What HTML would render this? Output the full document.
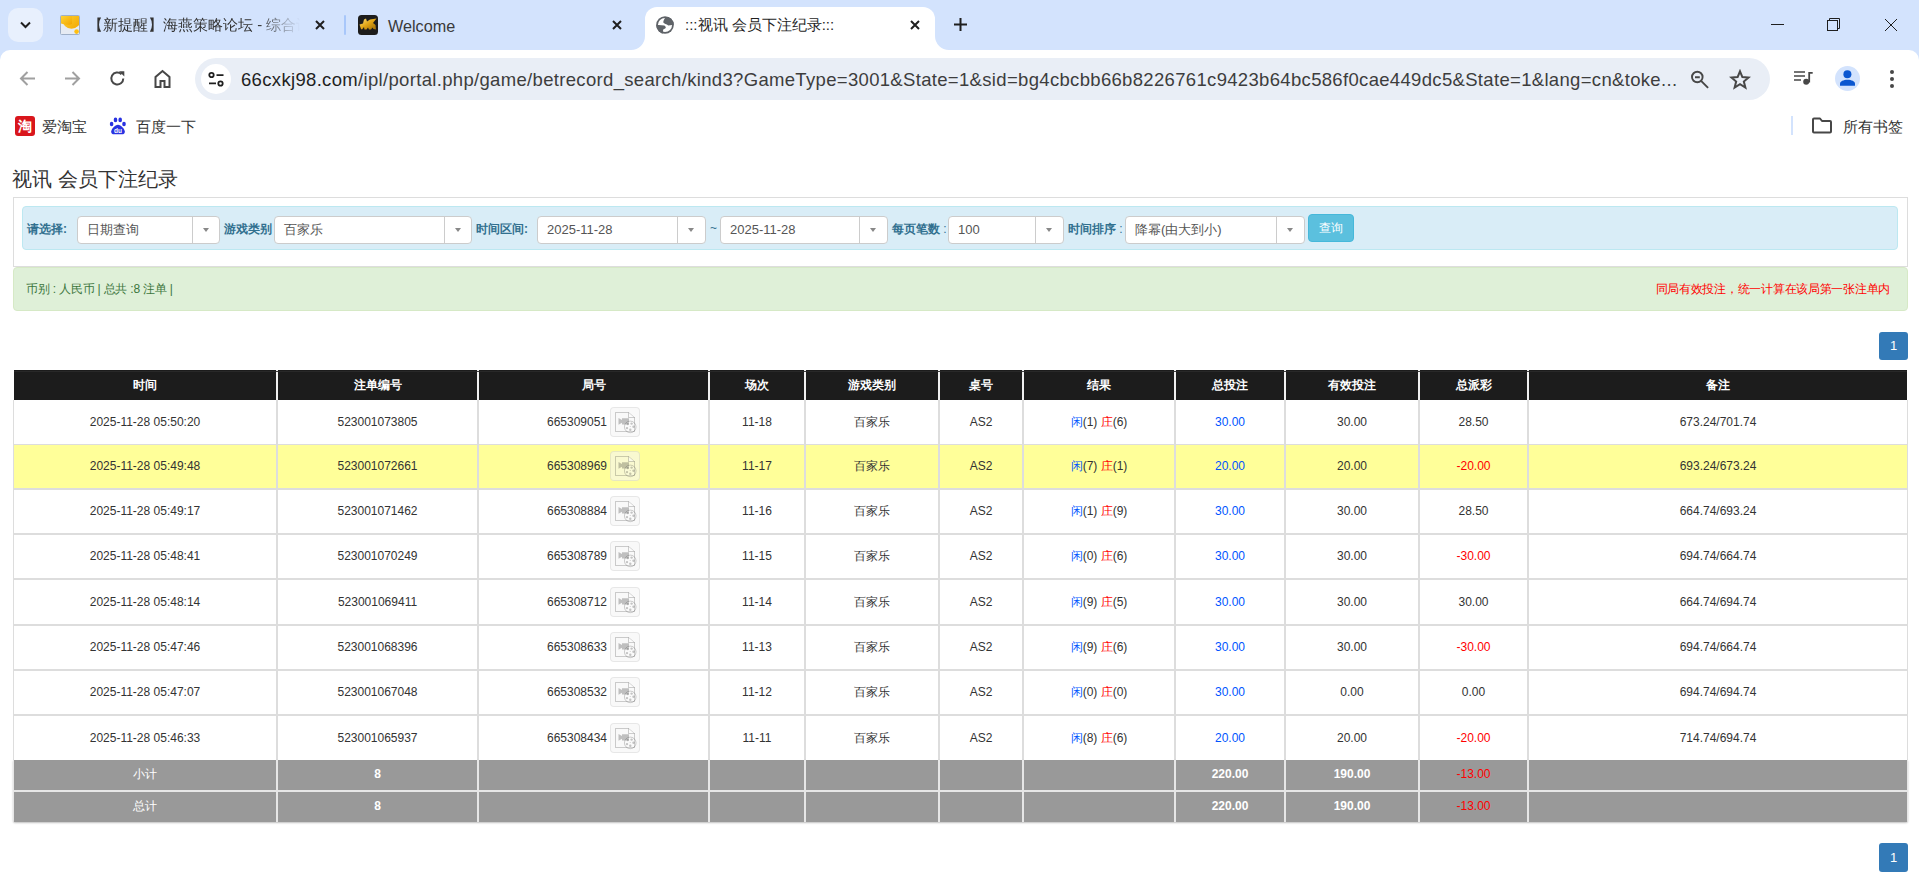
<!DOCTYPE html><html><head><meta charset="utf-8"><style>
*{margin:0;padding:0;box-sizing:border-box}
html,body{width:1919px;height:894px;overflow:hidden;background:#fff;font-family:"Liberation Sans",sans-serif;}
.a{position:absolute}
.tabstrip{left:0;top:0;width:1919px;height:50px;background:#d3e3fd}
.ttl{font-size:15px;color:#1f1f1f;white-space:nowrap;line-height:18px}
.cell{position:absolute;display:flex;align-items:center;justify-content:center;font-size:12px;color:#333;white-space:nowrap}
.hd{color:#fff;font-weight:bold;background:#1c1c1c}
.bl{color:#05f}.rd{color:#f00}
.sel{position:absolute;background:#fff;border:1px solid #ccc;border-radius:4px;height:28px;top:216px}
.sel .t{position:absolute;left:9px;top:0;line-height:26px;font-size:13px;color:#555;white-space:nowrap}
.sel .dv{position:absolute;top:0;bottom:0;width:1px;background:#ccc}
.sel .ct{position:absolute;top:11px;width:0;height:0;border-left:3px solid transparent;border-right:3px solid transparent;border-top:4px solid #888}
.lbl{position:absolute;top:221px;font-size:12px;font-weight:bold;color:#31708f;white-space:nowrap;line-height:16px}
</style></head><body>

<div class="a tabstrip" style="height:62px"></div>
<div class="a" style="left:8px;top:8px;width:35px;height:34px;border-radius:10px;background:#e8f0fd"></div>
<svg class="a" style="left:18px;top:17px" width="15" height="15" viewBox="0 0 15 15"><path d="M3 5.5l4.5 4.5 4.5-4.5" fill="none" stroke="#1f1f1f" stroke-width="2"/></svg>
<svg class="a" style="left:60px;top:15px" width="20" height="20" viewBox="0 0 20 20"><defs><linearGradient id="fy" x1="0" y1="0" x2="1" y2="1"><stop offset="0" stop-color="#ffd83a"/><stop offset="1" stop-color="#f2a600"/></linearGradient></defs><rect x="0.5" y="0.5" width="19" height="19" rx="1" fill="#e6ebf3" stroke="#9fb0c8"/><clipPath id="fc"><rect x="1" y="1" width="18" height="18"/></clipPath><g clip-path="url(#fc)"><circle cx="11.5" cy="4.5" r="9.3" fill="url(#fy)"/><path d="M0 0H12V9C9 10 7 10 5 9.5 3 9 1 8.5 0 8Z" fill="url(#fy)"/></g><circle cx="16.6" cy="16.6" r="2.3" fill="#ffbf10"/></svg>
<div class="a ttl" style="color:#333;left:88px;top:16px;width:212px;overflow:hidden;-webkit-mask-image:linear-gradient(90deg,#000 80%,transparent)">【新提醒】海燕策略论坛 - 综合讨论</div>
<svg class="a" style="left:315px;top:20px" width="10" height="10" viewBox="0 0 10 10"><path d="M1 1L9 9M9 1L1 9" stroke="#1f1f1f" stroke-width="2" fill="none"/></svg>
<div class="a" style="left:344px;top:15px;width:2px;height:20px;background:#a8c7fa;border-radius:1px"></div>
<svg class="a" style="left:358px;top:15px" width="20" height="20" viewBox="0 0 20 20"><defs><linearGradient id="fg" x1="0" y1="0" x2="1" y2="1"><stop offset="0" stop-color="#ffe27a"/><stop offset=".5" stop-color="#e0a414"/><stop offset="1" stop-color="#9a6a08"/></linearGradient></defs><rect x="0" y="0" width="20" height="20" rx="3.5" fill="#1c1c1c"/><path d="M1.5 9.5L5 8.5 6 4.5 8 3.5 9 6.5 12 4.5 18.5 3.5 15 8 17.5 10 18 14.5 15.5 14 14.5 12.5 13 14.5 11 14.5 10 12.5 8.5 14.5 6.5 14.5 6 12 4 14.5 3 14Z" fill="url(#fg)"/></svg>
<div class="a ttl" style="left:388px;top:16px;font-size:16.2px;line-height:20px;color:#3a3a3a">Welcome</div>
<svg class="a" style="left:612px;top:20px" width="10" height="10" viewBox="0 0 10 10"><path d="M1 1L9 9M9 1L1 9" stroke="#1f1f1f" stroke-width="2" fill="none"/></svg>
<div class="a" style="left:645px;top:7px;width:290px;height:43px;background:#fff;border-radius:12px 12px 0 0"></div>
<svg class="a" style="left:631px;top:36px" width="14" height="14"><path d="M0 14A14 14 0 0 0 14 0V14Z" fill="#fff"/></svg>
<svg class="a" style="left:935px;top:36px" width="14" height="14"><path d="M0 0A14 14 0 0 0 14 14H0Z" fill="#fff"/></svg>
<svg class="a" style="left:656px;top:16px" width="18" height="18" viewBox="0 0 18 18"><defs><clipPath id="gc"><circle cx="9" cy="9" r="8.8"/></clipPath></defs><g clip-path="url(#gc)"><rect width="18" height="18" fill="#5f6368"/><circle cx="9" cy="9" r="7.1" fill="#fff"/><path d="M9.9 1C8.3 2.6 7.3 4.6 7.3 6.6 8 7.9 10.6 8.1 12.3 9.4L18 8.8V0Z" fill="#5f6368"/><path d="M0 8.8L8.2 9.6C9.6 10.3 9.9 11.2 9.7 11.9 9.1 12.9 7.1 13 7.05 13.8V18H0Z" fill="#5f6368"/></g></svg>
<div class="a ttl" style="left:685px;top:16px">:::视讯 会员下注纪录:::</div>
<svg class="a" style="left:910px;top:20px" width="10" height="10" viewBox="0 0 10 10"><path d="M1 1L9 9M9 1L1 9" stroke="#1f1f1f" stroke-width="2" fill="none"/></svg>
<svg class="a" style="left:954px;top:18px" width="13" height="13" viewBox="0 0 13 13"><path d="M6.5 0v13M0 6.5h13" stroke="#1f1f1f" stroke-width="2"/></svg>
<div class="a" style="left:1771px;top:24px;width:13px;height:1px;background:#1f1f1f"></div>
<svg class="a" style="left:1826px;top:17px" width="16" height="16" viewBox="0 0 16 16"><rect x="1.5" y="3.5" width="10" height="10" fill="none" stroke="#1f1f1f" stroke-width="1"/><path d="M3.5 3.5V1.5h10v10h-2" fill="none" stroke="#1f1f1f" stroke-width="1"/></svg>
<svg class="a" style="left:1884px;top:18px" width="14" height="14" viewBox="0 0 14 14"><path d="M1 1L13 13M13 1L1 13" stroke="#1f1f1f" stroke-width="1" fill="none"/></svg>
<div class="a" style="left:0;top:50px;width:1919px;height:100px;background:#fff;border-radius:10px 10px 0 0"></div>
<svg class="a" style="left:18px;top:69px" width="19" height="19" viewBox="0 0 19 19"><path d="M17 9.5H3.5M9.5 3L3 9.5l6.5 6.5" fill="none" stroke="#a0a0a0" stroke-width="2"/></svg>
<svg class="a" style="left:63px;top:69px" width="19" height="19" viewBox="0 0 19 19"><path d="M2 9.5h13.5M9.5 3L16 9.5 9.5 16" fill="none" stroke="#a0a0a0" stroke-width="2"/></svg>
<svg class="a" style="left:108px;top:69px" width="19" height="19" viewBox="0 0 19 19"><path d="M15.3 9.5a6 6 0 1 1-1.8-4.3" fill="none" stroke="#474747" stroke-width="2"/><path d="M11 2.3h5.3v5.3z" fill="#474747"/></svg>
<svg class="a" style="left:153px;top:69px" width="19" height="20" viewBox="0 0 19 20"><path d="M2.5 18V8L9.5 2l7 6v10h-5v-6h-4v6z" fill="none" stroke="#474747" stroke-width="2" stroke-linejoin="miter"/></svg>
<div class="a" style="left:195px;top:58px;width:1575px;height:42px;border-radius:21px;background:#e9eef6"></div>
<div class="a" style="left:201px;top:64px;width:30px;height:30px;border-radius:50%;background:#fff"></div>
<svg class="a" style="left:207px;top:71px" width="18" height="17" viewBox="0 0 18 17"><circle cx="4.5" cy="4" r="2.2" fill="none" stroke="#1f1f1f" stroke-width="1.8"/><path d="M9.5 4.2h7M2 12.3h7" stroke="#1f1f1f" stroke-width="1.8"/><circle cx="13.5" cy="12.5" r="2.2" fill="none" stroke="#1f1f1f" stroke-width="1.8"/></svg>
<div class="a" style="left:241px;top:67px;font-size:18.5px;line-height:26px;color:#1f1f1f;white-space:nowrap;letter-spacing:0.327px" id="url">66cxkj98.com<span style="color:#3d3d3d">/ipl/portal.php/game/betrecord_search/kind3?GameType=3001&amp;State=1&amp;sid=bg4cbcbb66b8226761c9423b64bc586f0cae449dc5&amp;State=1&amp;lang=cn&amp;toke...</span></div>
<svg class="a" style="left:1690px;top:70px" width="21" height="21" viewBox="0 0 21 21"><circle cx="7.3" cy="7" r="5.3" fill="none" stroke="#474747" stroke-width="1.9"/><path d="M5 7.2h4.8M11.1 10.8l7 7.1" stroke="#474747" stroke-width="1.9"/></svg>
<svg class="a" style="left:1729px;top:69px" width="22" height="21" viewBox="0 0 24 23"><path d="M12 2.5l2.6 6.3 6.8.5-5.2 4.4 1.7 6.6L12 16.7l-5.9 3.6 1.7-6.6-5.2-4.4 6.8-.5z" fill="none" stroke="#474747" stroke-width="2.2" stroke-linejoin="miter"/></svg>
<svg class="a" style="left:1794px;top:70px" width="21" height="17" viewBox="0 0 21 17"><path d="M0 2h11M0 6h11M0 10h7" stroke="#474747" stroke-width="1.7"/><path d="M15.2 12.5V2.8h3.5" fill="none" stroke="#474747" stroke-width="1.8"/><circle cx="12.2" cy="11.8" r="3" fill="#474747"/></svg>
<svg class="a" style="left:1835px;top:66px" width="25" height="25" viewBox="0 0 25 25"><circle cx="12.5" cy="12.5" r="12.5" fill="#d3e3fd"/><circle cx="12.4" cy="8.2" r="4" fill="#0b57d0"/><path d="M5 19.8V17.5C5 15.5 8.5 13.8 12.5 13.8S20 15.5 20 17.5V19.8Z" fill="#0b57d0"/></svg>
<div class="a" style="left:1890px;top:70px;width:4px;height:4px;border-radius:50%;background:#474747"></div>
<div class="a" style="left:1890px;top:77px;width:4px;height:4px;border-radius:50%;background:#474747"></div>
<div class="a" style="left:1890px;top:84px;width:4px;height:4px;border-radius:50%;background:#474747"></div>
<div class="a" style="left:15px;top:116px;width:20px;height:20px;background:#d9161c;border-radius:3px;color:#fff;font-size:14px;font-weight:bold;line-height:20px;text-align:center">淘</div>
<div class="a ttl" style="left:42px;top:118px;font-size:14.5px;color:#333">爱淘宝</div>
<svg class="a" style="left:109px;top:116px" width="18" height="19" viewBox="0 0 18 19"><g fill="#2932e1"><ellipse cx="6.5" cy="3.9" rx="1.8" ry="2.4"/><ellipse cx="11.2" cy="3.9" rx="1.8" ry="2.4"/><ellipse cx="2.6" cy="8" rx="1.8" ry="2.3"/><ellipse cx="15" cy="8" rx="1.8" ry="2.3"/><path d="M9 8.8C6 8.8 2.5 13 2.2 15.5 2 17.5 3.5 18.3 5 18.3H13C14.5 18.3 16 17.5 15.8 15.5 15.5 13 12 8.8 9 8.8Z"/></g><text x="9" y="17" font-size="6.5" font-family="Liberation Sans" font-weight="bold" fill="#fff" text-anchor="middle">du</text></svg>
<div class="a ttl" style="left:136px;top:118px;font-size:14.5px;color:#333">百度一下</div>
<div class="a" style="left:1791px;top:116px;width:2px;height:19px;background:#d3e3fd"></div>
<svg class="a" style="left:1811px;top:117px" width="22" height="17" viewBox="0 0 22 17"><path d="M2 2.5C2 1.9 2.4 1.5 3 1.5h6l2 2.5h8c.6 0 1 .4 1 1v9.5c0 .6-.4 1-1 1H3c-.6 0-1-.4-1-1z" fill="none" stroke="#474747" stroke-width="2" stroke-linejoin="round"/></svg>
<div class="a ttl" style="left:1843px;top:118px;font-size:14.5px;color:#333">所有书签</div>
<div class="a" style="left:12px;top:167px;font-size:20px;line-height:24px;color:#333;white-space:nowrap">视讯 会员下注纪录</div>
<div class="a" style="left:13px;top:197px;width:1895px;height:70px;border:1px solid #ddd;background:#fff"></div>
<div class="a" style="left:22px;top:206px;width:1876px;height:44px;border:1px solid #bce8f1;background:#d9edf7;border-radius:4px"></div>
<div class="lbl" style="left:27px">请选择:</div>
<div class="sel" style="left:77px;width:143px"><div class="t">日期查询</div><div class="dv" style="left:114px"></div><div class="ct" style="left:125px"></div></div>
<div class="lbl" style="left:224px">游戏类别</div>
<div class="sel" style="left:274px;width:198px"><div class="t">百家乐</div><div class="dv" style="left:169px"></div><div class="ct" style="left:180px"></div></div>
<div class="lbl" style="left:476px">时间区间:</div>
<div class="sel" style="left:537px;width:169px"><div class="t">2025-11-28</div><div class="dv" style="left:139px"></div><div class="ct" style="left:150px"></div></div>
<div class="a" style="left:710px;top:221px;font-size:12px;color:#31708f">~</div>
<div class="sel" style="left:720px;width:168px"><div class="t">2025-11-28</div><div class="dv" style="left:138px"></div><div class="ct" style="left:149px"></div></div>
<div class="lbl" style="left:892px">每页笔数<span style="font-weight:normal"> :</span></div>
<div class="sel" style="left:948px;width:116px"><div class="t">100</div><div class="dv" style="left:86px"></div><div class="ct" style="left:97px"></div></div>
<div class="lbl" style="left:1068px">时间排序<span style="font-weight:normal"> :</span></div>
<div class="sel" style="left:1125px;width:180px"><div class="t">降幂(由大到小)</div><div class="dv" style="left:150px"></div><div class="ct" style="left:161px"></div></div>
<div class="a" style="left:1308px;top:214px;width:46px;height:28px;background:#5bc0de;border:1px solid #46b8da;border-radius:4px;color:#fff;font-size:12px;line-height:26px;text-align:center">查询</div>
<div class="a" style="left:13px;top:267px;width:1895px;height:44px;border:1px solid #d6e9c6;background:#dff0d8;border-radius:4px"></div>
<div class="a" style="left:26px;top:281px;font-size:12px;line-height:16px;color:#3c763d;white-space:nowrap;letter-spacing:-0.2px">币别 : 人民币 | 总共 :8 注单 |</div>
<div class="a" style="right:29px;top:281px;font-size:12px;line-height:16px;color:#f00;white-space:nowrap;letter-spacing:-0.28px">同局有效投注，统一计算在该局第一张注单内</div>
<div class="a" style="left:1879px;top:332px;width:29px;height:28px;background:#337ab7;border-radius:3px;color:#fff;font-size:13px;line-height:28px;text-align:center">1</div>
<div class="a" style="left:1879px;top:843px;width:29px;height:29px;background:#337ab7;border-radius:3px;color:#fff;font-size:13px;line-height:29px;text-align:center">1</div>
<div class="a" style="left:13px;top:400px;width:1895px;height:360px;background:#ddd"></div>
<div class="a" style="left:13px;top:760px;width:1895px;height:62px;background:#e6e6e6;box-shadow:0 1px 2px rgba(0,0,0,.25);border-radius:0 0 2px 2px"></div>
<div class="a" style="left:14px;top:370px;width:1893px;height:30px;background:#f0f0f0"></div>
<div class="a" style="left:14px;top:371px;width:1893px;height:1px;background:#2a2a2a;z-index:2;pointer-events:none;opacity:.9"></div>
<div class="cell hd" style="left:14px;top:370px;width:262px;height:30px">时间</div>
<div class="cell hd" style="left:278px;top:370px;width:199px;height:30px">注单编号</div>
<div class="cell hd" style="left:479px;top:370px;width:229px;height:30px">局号</div>
<div class="cell hd" style="left:710px;top:370px;width:94px;height:30px">场次</div>
<div class="cell hd" style="left:806px;top:370px;width:132px;height:30px">游戏类别</div>
<div class="cell hd" style="left:940px;top:370px;width:82px;height:30px">桌号</div>
<div class="cell hd" style="left:1024px;top:370px;width:150px;height:30px">结果</div>
<div class="cell hd" style="left:1176px;top:370px;width:108px;height:30px">总投注</div>
<div class="cell hd" style="left:1286px;top:370px;width:132px;height:30px">有效投注</div>
<div class="cell hd" style="left:1420px;top:370px;width:107px;height:30px">总派彩</div>
<div class="cell hd" style="left:1529px;top:370px;width:378px;height:30px">备注</div>
<div class="cell" style="left:14px;top:400px;width:262px;height:44px;background:#fff;padding-bottom:0px"><span>2025-11-28 05:50:20</span></div>
<div class="cell" style="left:278px;top:400px;width:199px;height:44px;background:#fff;padding-bottom:0px"><span>523001073805</span></div>
<div class="cell" style="left:479px;top:400px;width:229px;height:44px;background:#fff;padding-bottom:0px"><span><span style="position:relative;padding-right:33px">665309051<span class="ib" style="position:absolute;right:0;top:50%;margin-top:-15px;width:30px;height:30px;border:1px solid rgba(0,0,0,.07);border-radius:4px;background:rgba(245,245,245,.6)"><svg class="film" style="position:absolute;left:4px;top:4px" width="22" height="22" viewBox="0 0 22 22"><path d="M0.5 0.5H13.5L19.5 5.5V19.5H0.5Z" fill="none" stroke="rgba(0,0,0,.19)" stroke-width="1"/><path d="M13.5 0.5V5.5H19.5" fill="rgba(255,255,255,.5)" stroke="rgba(0,0,0,.19)" stroke-width="1"/><path d="M3.5 6L7 8V6.3H14V12.5H7V10.8L3.5 12.8Z" fill="rgba(0,0,0,.23)"/><circle cx="15.25" cy="14.9" r="5.8" fill="rgba(255,255,255,.15)" stroke="rgba(0,0,0,.21)" stroke-width="0.9"/><g fill="rgba(0,0,0,.22)"><circle cx="12.7" cy="12.1" r="1.2"/><circle cx="16.6" cy="11.6" r="1.2"/><circle cx="18.5" cy="14.8" r="1.2"/><circle cx="15.3" cy="17.7" r="1.2"/><circle cx="12" cy="16.1" r="1.2"/><circle cx="15.2" cy="14.6" r="0.5"/></g></svg></span></span></span></div>
<div class="cell" style="left:710px;top:400px;width:94px;height:44px;background:#fff;padding-bottom:0px"><span>11-18</span></div>
<div class="cell" style="left:806px;top:400px;width:132px;height:44px;background:#fff;padding-bottom:0px"><span>百家乐</span></div>
<div class="cell" style="left:940px;top:400px;width:82px;height:44px;background:#fff;padding-bottom:0px"><span>AS2</span></div>
<div class="cell" style="left:1024px;top:400px;width:150px;height:44px;background:#fff;padding-bottom:0px"><span><span class="bl">闲</span>(1) <span class="rd">庄</span>(6)</span></div>
<div class="cell" style="left:1176px;top:400px;width:108px;height:44px;background:#fff;padding-bottom:0px"><span><span class="bl">30.00</span></span></div>
<div class="cell" style="left:1286px;top:400px;width:132px;height:44px;background:#fff;padding-bottom:0px"><span>30.00</span></div>
<div class="cell" style="left:1420px;top:400px;width:107px;height:44px;background:#fff;padding-bottom:0px"><span>28.50</span></div>
<div class="cell" style="left:1529px;top:400px;width:378px;height:44px;background:#fff;padding-bottom:0px"><span>673.24/701.74</span></div>
<div class="cell" style="left:14px;top:445px;width:262px;height:43px;background:#ffff99;padding-bottom:1px"><span>2025-11-28 05:49:48</span></div>
<div class="cell" style="left:278px;top:445px;width:199px;height:43px;background:#ffff99;padding-bottom:1px"><span>523001072661</span></div>
<div class="cell" style="left:479px;top:445px;width:229px;height:43px;background:#ffff99;padding-bottom:1px"><span><span style="position:relative;padding-right:33px">665308969<span class="ib" style="position:absolute;right:0;top:50%;margin-top:-15px;width:30px;height:30px;border:1px solid rgba(0,0,0,.07);border-radius:4px;background:rgba(245,245,245,.6)"><svg class="film" style="position:absolute;left:4px;top:4px" width="22" height="22" viewBox="0 0 22 22"><path d="M0.5 0.5H13.5L19.5 5.5V19.5H0.5Z" fill="none" stroke="rgba(0,0,0,.19)" stroke-width="1"/><path d="M13.5 0.5V5.5H19.5" fill="rgba(255,255,255,.5)" stroke="rgba(0,0,0,.19)" stroke-width="1"/><path d="M3.5 6L7 8V6.3H14V12.5H7V10.8L3.5 12.8Z" fill="rgba(0,0,0,.23)"/><circle cx="15.25" cy="14.9" r="5.8" fill="rgba(255,255,255,.15)" stroke="rgba(0,0,0,.21)" stroke-width="0.9"/><g fill="rgba(0,0,0,.22)"><circle cx="12.7" cy="12.1" r="1.2"/><circle cx="16.6" cy="11.6" r="1.2"/><circle cx="18.5" cy="14.8" r="1.2"/><circle cx="15.3" cy="17.7" r="1.2"/><circle cx="12" cy="16.1" r="1.2"/><circle cx="15.2" cy="14.6" r="0.5"/></g></svg></span></span></span></div>
<div class="cell" style="left:710px;top:445px;width:94px;height:43px;background:#ffff99;padding-bottom:1px"><span>11-17</span></div>
<div class="cell" style="left:806px;top:445px;width:132px;height:43px;background:#ffff99;padding-bottom:1px"><span>百家乐</span></div>
<div class="cell" style="left:940px;top:445px;width:82px;height:43px;background:#ffff99;padding-bottom:1px"><span>AS2</span></div>
<div class="cell" style="left:1024px;top:445px;width:150px;height:43px;background:#ffff99;padding-bottom:1px"><span><span class="bl">闲</span>(7) <span class="rd">庄</span>(1)</span></div>
<div class="cell" style="left:1176px;top:445px;width:108px;height:43px;background:#ffff99;padding-bottom:1px"><span><span class="bl">20.00</span></span></div>
<div class="cell" style="left:1286px;top:445px;width:132px;height:43px;background:#ffff99;padding-bottom:1px"><span>20.00</span></div>
<div class="cell" style="left:1420px;top:445px;width:107px;height:43px;background:#ffff99;padding-bottom:1px"><span><span class="rd">-20.00</span></span></div>
<div class="cell" style="left:1529px;top:445px;width:378px;height:43px;background:#ffff99;padding-bottom:1px"><span>693.24/673.24</span></div>
<div class="cell" style="left:14px;top:490px;width:262px;height:43px;background:#fff;padding-bottom:1px"><span>2025-11-28 05:49:17</span></div>
<div class="cell" style="left:278px;top:490px;width:199px;height:43px;background:#fff;padding-bottom:1px"><span>523001071462</span></div>
<div class="cell" style="left:479px;top:490px;width:229px;height:43px;background:#fff;padding-bottom:1px"><span><span style="position:relative;padding-right:33px">665308884<span class="ib" style="position:absolute;right:0;top:50%;margin-top:-15px;width:30px;height:30px;border:1px solid rgba(0,0,0,.07);border-radius:4px;background:rgba(245,245,245,.6)"><svg class="film" style="position:absolute;left:4px;top:4px" width="22" height="22" viewBox="0 0 22 22"><path d="M0.5 0.5H13.5L19.5 5.5V19.5H0.5Z" fill="none" stroke="rgba(0,0,0,.19)" stroke-width="1"/><path d="M13.5 0.5V5.5H19.5" fill="rgba(255,255,255,.5)" stroke="rgba(0,0,0,.19)" stroke-width="1"/><path d="M3.5 6L7 8V6.3H14V12.5H7V10.8L3.5 12.8Z" fill="rgba(0,0,0,.23)"/><circle cx="15.25" cy="14.9" r="5.8" fill="rgba(255,255,255,.15)" stroke="rgba(0,0,0,.21)" stroke-width="0.9"/><g fill="rgba(0,0,0,.22)"><circle cx="12.7" cy="12.1" r="1.2"/><circle cx="16.6" cy="11.6" r="1.2"/><circle cx="18.5" cy="14.8" r="1.2"/><circle cx="15.3" cy="17.7" r="1.2"/><circle cx="12" cy="16.1" r="1.2"/><circle cx="15.2" cy="14.6" r="0.5"/></g></svg></span></span></span></div>
<div class="cell" style="left:710px;top:490px;width:94px;height:43px;background:#fff;padding-bottom:1px"><span>11-16</span></div>
<div class="cell" style="left:806px;top:490px;width:132px;height:43px;background:#fff;padding-bottom:1px"><span>百家乐</span></div>
<div class="cell" style="left:940px;top:490px;width:82px;height:43px;background:#fff;padding-bottom:1px"><span>AS2</span></div>
<div class="cell" style="left:1024px;top:490px;width:150px;height:43px;background:#fff;padding-bottom:1px"><span><span class="bl">闲</span>(1) <span class="rd">庄</span>(9)</span></div>
<div class="cell" style="left:1176px;top:490px;width:108px;height:43px;background:#fff;padding-bottom:1px"><span><span class="bl">30.00</span></span></div>
<div class="cell" style="left:1286px;top:490px;width:132px;height:43px;background:#fff;padding-bottom:1px"><span>30.00</span></div>
<div class="cell" style="left:1420px;top:490px;width:107px;height:43px;background:#fff;padding-bottom:1px"><span>28.50</span></div>
<div class="cell" style="left:1529px;top:490px;width:378px;height:43px;background:#fff;padding-bottom:1px"><span>664.74/693.24</span></div>
<div class="cell" style="left:14px;top:535px;width:262px;height:43px;background:#fff;padding-bottom:1px"><span>2025-11-28 05:48:41</span></div>
<div class="cell" style="left:278px;top:535px;width:199px;height:43px;background:#fff;padding-bottom:1px"><span>523001070249</span></div>
<div class="cell" style="left:479px;top:535px;width:229px;height:43px;background:#fff;padding-bottom:1px"><span><span style="position:relative;padding-right:33px">665308789<span class="ib" style="position:absolute;right:0;top:50%;margin-top:-15px;width:30px;height:30px;border:1px solid rgba(0,0,0,.07);border-radius:4px;background:rgba(245,245,245,.6)"><svg class="film" style="position:absolute;left:4px;top:4px" width="22" height="22" viewBox="0 0 22 22"><path d="M0.5 0.5H13.5L19.5 5.5V19.5H0.5Z" fill="none" stroke="rgba(0,0,0,.19)" stroke-width="1"/><path d="M13.5 0.5V5.5H19.5" fill="rgba(255,255,255,.5)" stroke="rgba(0,0,0,.19)" stroke-width="1"/><path d="M3.5 6L7 8V6.3H14V12.5H7V10.8L3.5 12.8Z" fill="rgba(0,0,0,.23)"/><circle cx="15.25" cy="14.9" r="5.8" fill="rgba(255,255,255,.15)" stroke="rgba(0,0,0,.21)" stroke-width="0.9"/><g fill="rgba(0,0,0,.22)"><circle cx="12.7" cy="12.1" r="1.2"/><circle cx="16.6" cy="11.6" r="1.2"/><circle cx="18.5" cy="14.8" r="1.2"/><circle cx="15.3" cy="17.7" r="1.2"/><circle cx="12" cy="16.1" r="1.2"/><circle cx="15.2" cy="14.6" r="0.5"/></g></svg></span></span></span></div>
<div class="cell" style="left:710px;top:535px;width:94px;height:43px;background:#fff;padding-bottom:1px"><span>11-15</span></div>
<div class="cell" style="left:806px;top:535px;width:132px;height:43px;background:#fff;padding-bottom:1px"><span>百家乐</span></div>
<div class="cell" style="left:940px;top:535px;width:82px;height:43px;background:#fff;padding-bottom:1px"><span>AS2</span></div>
<div class="cell" style="left:1024px;top:535px;width:150px;height:43px;background:#fff;padding-bottom:1px"><span><span class="bl">闲</span>(0) <span class="rd">庄</span>(6)</span></div>
<div class="cell" style="left:1176px;top:535px;width:108px;height:43px;background:#fff;padding-bottom:1px"><span><span class="bl">30.00</span></span></div>
<div class="cell" style="left:1286px;top:535px;width:132px;height:43px;background:#fff;padding-bottom:1px"><span>30.00</span></div>
<div class="cell" style="left:1420px;top:535px;width:107px;height:43px;background:#fff;padding-bottom:1px"><span><span class="rd">-30.00</span></span></div>
<div class="cell" style="left:1529px;top:535px;width:378px;height:43px;background:#fff;padding-bottom:1px"><span>694.74/664.74</span></div>
<div class="cell" style="left:14px;top:580px;width:262px;height:44px;background:#fff;padding-bottom:0px"><span>2025-11-28 05:48:14</span></div>
<div class="cell" style="left:278px;top:580px;width:199px;height:44px;background:#fff;padding-bottom:0px"><span>523001069411</span></div>
<div class="cell" style="left:479px;top:580px;width:229px;height:44px;background:#fff;padding-bottom:0px"><span><span style="position:relative;padding-right:33px">665308712<span class="ib" style="position:absolute;right:0;top:50%;margin-top:-15px;width:30px;height:30px;border:1px solid rgba(0,0,0,.07);border-radius:4px;background:rgba(245,245,245,.6)"><svg class="film" style="position:absolute;left:4px;top:4px" width="22" height="22" viewBox="0 0 22 22"><path d="M0.5 0.5H13.5L19.5 5.5V19.5H0.5Z" fill="none" stroke="rgba(0,0,0,.19)" stroke-width="1"/><path d="M13.5 0.5V5.5H19.5" fill="rgba(255,255,255,.5)" stroke="rgba(0,0,0,.19)" stroke-width="1"/><path d="M3.5 6L7 8V6.3H14V12.5H7V10.8L3.5 12.8Z" fill="rgba(0,0,0,.23)"/><circle cx="15.25" cy="14.9" r="5.8" fill="rgba(255,255,255,.15)" stroke="rgba(0,0,0,.21)" stroke-width="0.9"/><g fill="rgba(0,0,0,.22)"><circle cx="12.7" cy="12.1" r="1.2"/><circle cx="16.6" cy="11.6" r="1.2"/><circle cx="18.5" cy="14.8" r="1.2"/><circle cx="15.3" cy="17.7" r="1.2"/><circle cx="12" cy="16.1" r="1.2"/><circle cx="15.2" cy="14.6" r="0.5"/></g></svg></span></span></span></div>
<div class="cell" style="left:710px;top:580px;width:94px;height:44px;background:#fff;padding-bottom:0px"><span>11-14</span></div>
<div class="cell" style="left:806px;top:580px;width:132px;height:44px;background:#fff;padding-bottom:0px"><span>百家乐</span></div>
<div class="cell" style="left:940px;top:580px;width:82px;height:44px;background:#fff;padding-bottom:0px"><span>AS2</span></div>
<div class="cell" style="left:1024px;top:580px;width:150px;height:44px;background:#fff;padding-bottom:0px"><span><span class="bl">闲</span>(9) <span class="rd">庄</span>(5)</span></div>
<div class="cell" style="left:1176px;top:580px;width:108px;height:44px;background:#fff;padding-bottom:0px"><span><span class="bl">30.00</span></span></div>
<div class="cell" style="left:1286px;top:580px;width:132px;height:44px;background:#fff;padding-bottom:0px"><span>30.00</span></div>
<div class="cell" style="left:1420px;top:580px;width:107px;height:44px;background:#fff;padding-bottom:0px"><span>30.00</span></div>
<div class="cell" style="left:1529px;top:580px;width:378px;height:44px;background:#fff;padding-bottom:0px"><span>664.74/694.74</span></div>
<div class="cell" style="left:14px;top:626px;width:262px;height:43px;background:#fff;padding-bottom:1px"><span>2025-11-28 05:47:46</span></div>
<div class="cell" style="left:278px;top:626px;width:199px;height:43px;background:#fff;padding-bottom:1px"><span>523001068396</span></div>
<div class="cell" style="left:479px;top:626px;width:229px;height:43px;background:#fff;padding-bottom:1px"><span><span style="position:relative;padding-right:33px">665308633<span class="ib" style="position:absolute;right:0;top:50%;margin-top:-15px;width:30px;height:30px;border:1px solid rgba(0,0,0,.07);border-radius:4px;background:rgba(245,245,245,.6)"><svg class="film" style="position:absolute;left:4px;top:4px" width="22" height="22" viewBox="0 0 22 22"><path d="M0.5 0.5H13.5L19.5 5.5V19.5H0.5Z" fill="none" stroke="rgba(0,0,0,.19)" stroke-width="1"/><path d="M13.5 0.5V5.5H19.5" fill="rgba(255,255,255,.5)" stroke="rgba(0,0,0,.19)" stroke-width="1"/><path d="M3.5 6L7 8V6.3H14V12.5H7V10.8L3.5 12.8Z" fill="rgba(0,0,0,.23)"/><circle cx="15.25" cy="14.9" r="5.8" fill="rgba(255,255,255,.15)" stroke="rgba(0,0,0,.21)" stroke-width="0.9"/><g fill="rgba(0,0,0,.22)"><circle cx="12.7" cy="12.1" r="1.2"/><circle cx="16.6" cy="11.6" r="1.2"/><circle cx="18.5" cy="14.8" r="1.2"/><circle cx="15.3" cy="17.7" r="1.2"/><circle cx="12" cy="16.1" r="1.2"/><circle cx="15.2" cy="14.6" r="0.5"/></g></svg></span></span></span></div>
<div class="cell" style="left:710px;top:626px;width:94px;height:43px;background:#fff;padding-bottom:1px"><span>11-13</span></div>
<div class="cell" style="left:806px;top:626px;width:132px;height:43px;background:#fff;padding-bottom:1px"><span>百家乐</span></div>
<div class="cell" style="left:940px;top:626px;width:82px;height:43px;background:#fff;padding-bottom:1px"><span>AS2</span></div>
<div class="cell" style="left:1024px;top:626px;width:150px;height:43px;background:#fff;padding-bottom:1px"><span><span class="bl">闲</span>(9) <span class="rd">庄</span>(6)</span></div>
<div class="cell" style="left:1176px;top:626px;width:108px;height:43px;background:#fff;padding-bottom:1px"><span><span class="bl">30.00</span></span></div>
<div class="cell" style="left:1286px;top:626px;width:132px;height:43px;background:#fff;padding-bottom:1px"><span>30.00</span></div>
<div class="cell" style="left:1420px;top:626px;width:107px;height:43px;background:#fff;padding-bottom:1px"><span><span class="rd">-30.00</span></span></div>
<div class="cell" style="left:1529px;top:626px;width:378px;height:43px;background:#fff;padding-bottom:1px"><span>694.74/664.74</span></div>
<div class="cell" style="left:14px;top:671px;width:262px;height:43px;background:#fff;padding-bottom:1px"><span>2025-11-28 05:47:07</span></div>
<div class="cell" style="left:278px;top:671px;width:199px;height:43px;background:#fff;padding-bottom:1px"><span>523001067048</span></div>
<div class="cell" style="left:479px;top:671px;width:229px;height:43px;background:#fff;padding-bottom:1px"><span><span style="position:relative;padding-right:33px">665308532<span class="ib" style="position:absolute;right:0;top:50%;margin-top:-15px;width:30px;height:30px;border:1px solid rgba(0,0,0,.07);border-radius:4px;background:rgba(245,245,245,.6)"><svg class="film" style="position:absolute;left:4px;top:4px" width="22" height="22" viewBox="0 0 22 22"><path d="M0.5 0.5H13.5L19.5 5.5V19.5H0.5Z" fill="none" stroke="rgba(0,0,0,.19)" stroke-width="1"/><path d="M13.5 0.5V5.5H19.5" fill="rgba(255,255,255,.5)" stroke="rgba(0,0,0,.19)" stroke-width="1"/><path d="M3.5 6L7 8V6.3H14V12.5H7V10.8L3.5 12.8Z" fill="rgba(0,0,0,.23)"/><circle cx="15.25" cy="14.9" r="5.8" fill="rgba(255,255,255,.15)" stroke="rgba(0,0,0,.21)" stroke-width="0.9"/><g fill="rgba(0,0,0,.22)"><circle cx="12.7" cy="12.1" r="1.2"/><circle cx="16.6" cy="11.6" r="1.2"/><circle cx="18.5" cy="14.8" r="1.2"/><circle cx="15.3" cy="17.7" r="1.2"/><circle cx="12" cy="16.1" r="1.2"/><circle cx="15.2" cy="14.6" r="0.5"/></g></svg></span></span></span></div>
<div class="cell" style="left:710px;top:671px;width:94px;height:43px;background:#fff;padding-bottom:1px"><span>11-12</span></div>
<div class="cell" style="left:806px;top:671px;width:132px;height:43px;background:#fff;padding-bottom:1px"><span>百家乐</span></div>
<div class="cell" style="left:940px;top:671px;width:82px;height:43px;background:#fff;padding-bottom:1px"><span>AS2</span></div>
<div class="cell" style="left:1024px;top:671px;width:150px;height:43px;background:#fff;padding-bottom:1px"><span><span class="bl">闲</span>(0) <span class="rd">庄</span>(0)</span></div>
<div class="cell" style="left:1176px;top:671px;width:108px;height:43px;background:#fff;padding-bottom:1px"><span><span class="bl">30.00</span></span></div>
<div class="cell" style="left:1286px;top:671px;width:132px;height:43px;background:#fff;padding-bottom:1px"><span>0.00</span></div>
<div class="cell" style="left:1420px;top:671px;width:107px;height:43px;background:#fff;padding-bottom:1px"><span>0.00</span></div>
<div class="cell" style="left:1529px;top:671px;width:378px;height:43px;background:#fff;padding-bottom:1px"><span>694.74/694.74</span></div>
<div class="cell" style="left:14px;top:716px;width:262px;height:44px;background:#fff;padding-bottom:0px"><span>2025-11-28 05:46:33</span></div>
<div class="cell" style="left:278px;top:716px;width:199px;height:44px;background:#fff;padding-bottom:0px"><span>523001065937</span></div>
<div class="cell" style="left:479px;top:716px;width:229px;height:44px;background:#fff;padding-bottom:0px"><span><span style="position:relative;padding-right:33px">665308434<span class="ib" style="position:absolute;right:0;top:50%;margin-top:-15px;width:30px;height:30px;border:1px solid rgba(0,0,0,.07);border-radius:4px;background:rgba(245,245,245,.6)"><svg class="film" style="position:absolute;left:4px;top:4px" width="22" height="22" viewBox="0 0 22 22"><path d="M0.5 0.5H13.5L19.5 5.5V19.5H0.5Z" fill="none" stroke="rgba(0,0,0,.19)" stroke-width="1"/><path d="M13.5 0.5V5.5H19.5" fill="rgba(255,255,255,.5)" stroke="rgba(0,0,0,.19)" stroke-width="1"/><path d="M3.5 6L7 8V6.3H14V12.5H7V10.8L3.5 12.8Z" fill="rgba(0,0,0,.23)"/><circle cx="15.25" cy="14.9" r="5.8" fill="rgba(255,255,255,.15)" stroke="rgba(0,0,0,.21)" stroke-width="0.9"/><g fill="rgba(0,0,0,.22)"><circle cx="12.7" cy="12.1" r="1.2"/><circle cx="16.6" cy="11.6" r="1.2"/><circle cx="18.5" cy="14.8" r="1.2"/><circle cx="15.3" cy="17.7" r="1.2"/><circle cx="12" cy="16.1" r="1.2"/><circle cx="15.2" cy="14.6" r="0.5"/></g></svg></span></span></span></div>
<div class="cell" style="left:710px;top:716px;width:94px;height:44px;background:#fff;padding-bottom:0px"><span>11-11</span></div>
<div class="cell" style="left:806px;top:716px;width:132px;height:44px;background:#fff;padding-bottom:0px"><span>百家乐</span></div>
<div class="cell" style="left:940px;top:716px;width:82px;height:44px;background:#fff;padding-bottom:0px"><span>AS2</span></div>
<div class="cell" style="left:1024px;top:716px;width:150px;height:44px;background:#fff;padding-bottom:0px"><span><span class="bl">闲</span>(8) <span class="rd">庄</span>(6)</span></div>
<div class="cell" style="left:1176px;top:716px;width:108px;height:44px;background:#fff;padding-bottom:0px"><span><span class="bl">20.00</span></span></div>
<div class="cell" style="left:1286px;top:716px;width:132px;height:44px;background:#fff;padding-bottom:0px"><span>20.00</span></div>
<div class="cell" style="left:1420px;top:716px;width:107px;height:44px;background:#fff;padding-bottom:0px"><span><span class="rd">-20.00</span></span></div>
<div class="cell" style="left:1529px;top:716px;width:378px;height:44px;background:#fff;padding-bottom:0px"><span>714.74/694.74</span></div>
<div class="cell" style="left:14px;top:760px;width:262px;height:30px;background:#999;color:#fff;font-weight:normal;padding-bottom:2px"><span>小计</span></div>
<div class="cell" style="left:278px;top:760px;width:199px;height:30px;background:#999;color:#fff;font-weight:bold;padding-bottom:2px"><span>8</span></div>
<div class="cell" style="left:479px;top:760px;width:229px;height:30px;background:#999;color:#fff;font-weight:bold;padding-bottom:2px"><span></span></div>
<div class="cell" style="left:710px;top:760px;width:94px;height:30px;background:#999;color:#fff;font-weight:bold;padding-bottom:2px"><span></span></div>
<div class="cell" style="left:806px;top:760px;width:132px;height:30px;background:#999;color:#fff;font-weight:bold;padding-bottom:2px"><span></span></div>
<div class="cell" style="left:940px;top:760px;width:82px;height:30px;background:#999;color:#fff;font-weight:bold;padding-bottom:2px"><span></span></div>
<div class="cell" style="left:1024px;top:760px;width:150px;height:30px;background:#999;color:#fff;font-weight:bold;padding-bottom:2px"><span></span></div>
<div class="cell" style="left:1176px;top:760px;width:108px;height:30px;background:#999;color:#fff;font-weight:bold;padding-bottom:2px"><span>220.00</span></div>
<div class="cell" style="left:1286px;top:760px;width:132px;height:30px;background:#999;color:#fff;font-weight:bold;padding-bottom:2px"><span>190.00</span></div>
<div class="cell" style="left:1420px;top:760px;width:107px;height:30px;background:#999;color:#fff;font-weight:bold;padding-bottom:2px"><span><span class="rd" style="font-weight:normal">-13.00</span></span></div>
<div class="cell" style="left:1529px;top:760px;width:378px;height:30px;background:#999;color:#fff;font-weight:bold;padding-bottom:2px"><span></span></div>
<div class="cell" style="left:14px;top:792px;width:262px;height:30px;background:#999;color:#fff;font-weight:normal;padding-bottom:2px"><span>总计</span></div>
<div class="cell" style="left:278px;top:792px;width:199px;height:30px;background:#999;color:#fff;font-weight:bold;padding-bottom:2px"><span>8</span></div>
<div class="cell" style="left:479px;top:792px;width:229px;height:30px;background:#999;color:#fff;font-weight:bold;padding-bottom:2px"><span></span></div>
<div class="cell" style="left:710px;top:792px;width:94px;height:30px;background:#999;color:#fff;font-weight:bold;padding-bottom:2px"><span></span></div>
<div class="cell" style="left:806px;top:792px;width:132px;height:30px;background:#999;color:#fff;font-weight:bold;padding-bottom:2px"><span></span></div>
<div class="cell" style="left:940px;top:792px;width:82px;height:30px;background:#999;color:#fff;font-weight:bold;padding-bottom:2px"><span></span></div>
<div class="cell" style="left:1024px;top:792px;width:150px;height:30px;background:#999;color:#fff;font-weight:bold;padding-bottom:2px"><span></span></div>
<div class="cell" style="left:1176px;top:792px;width:108px;height:30px;background:#999;color:#fff;font-weight:bold;padding-bottom:2px"><span>220.00</span></div>
<div class="cell" style="left:1286px;top:792px;width:132px;height:30px;background:#999;color:#fff;font-weight:bold;padding-bottom:2px"><span>190.00</span></div>
<div class="cell" style="left:1420px;top:792px;width:107px;height:30px;background:#999;color:#fff;font-weight:bold;padding-bottom:2px"><span><span class="rd" style="font-weight:normal">-13.00</span></span></div>
<div class="cell" style="left:1529px;top:792px;width:378px;height:30px;background:#999;color:#fff;font-weight:bold;padding-bottom:2px"><span></span></div>
</body></html>
